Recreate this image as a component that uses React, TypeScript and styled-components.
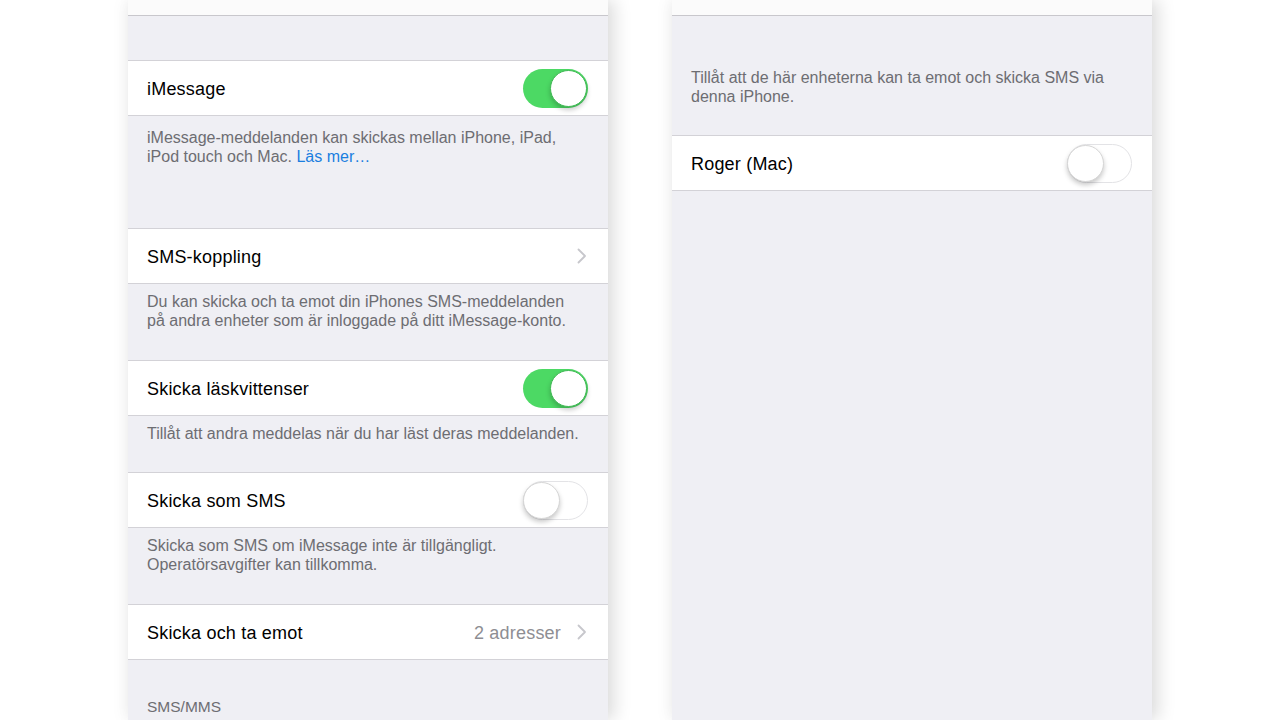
import React from "react";
import styled, { createGlobalStyle } from "styled-components";

const Global = createGlobalStyle`
  html, body { margin: 0; padding: 0; background: #ffffff; }
  body { font-family: "Liberation Sans", Arial, sans-serif; -webkit-font-smoothing: antialiased; }
  #root { height: 720px; overflow: hidden; }
`;

const Page = styled.div`
  display: flex;
  gap: 64px;
  padding-left: 128px;
  height: 720px;
  overflow: hidden;
  background: #ffffff;
`;

const Screen = styled.div`
  width: 480px;
  height: 720px;
  background: #efeff4;
  box-shadow: 7px 0 16px rgba(0, 0, 0, 0.13), -5px 0 14px rgba(0, 0, 0, 0.04);
  display: flex;
  flex-direction: column;
`;

const TopCell = styled.div`
  height: 15px;
  background: #fbfbfb;
  border-bottom: 1px solid #c8c7cc;
  flex-shrink: 0;
`;

const Spacer = styled.div<{ $h: number }>`
  height: ${(p) => p.$h}px;
  flex-shrink: 0;
`;

const Group = styled.div`
  background: #ffffff;
  border-top: 1px solid #d3d2d7;
  border-bottom: 1px solid #d3d2d7;
  flex-shrink: 0;
`;

const Row = styled.div`
  height: 54px;
  display: flex;
  align-items: center;
  padding: 0 20px 0 19px;
`;

const Label = styled.div`
  flex: 1;
  font-size: 18px;
  color: #000000;
  letter-spacing: 0.2px;
  padding-top: 2px;
`;

const Detail = styled.div`
  font-size: 18px;
  color: #8e8e93;
  margin-right: 16px;
  letter-spacing: 0.2px;
  padding-top: 2px;
`;

const Footer = styled.div<{ $top: number; $bottom: number; $right?: number }>`
  padding: ${(p) => p.$top}px ${(p) => p.$right ?? 40}px ${(p) => p.$bottom}px 19px;
  font-size: 16px;
  line-height: 19px;
  color: #6d6d72;
  flex-shrink: 0;
`;

const Link = styled.span`
  color: #1a7ee0;
`;

const Header = styled.div`
  padding: 0 19px;
  font-size: 15.5px;
  line-height: 19px;
  color: #6d6d72;
`;

const Track = styled.div<{ $on: boolean }>`
  width: 65px;
  height: 39px;
  border-radius: 20px;
  box-sizing: border-box;
  position: relative;
  background: ${(p) => (p.$on ? "#4cd964" : "#ffffff")};
  border: ${(p) => (p.$on ? "none" : "1.5px solid #e3e3e6")};
  flex-shrink: 0;
`;

const Knob = styled.div<{ $on: boolean }>`
  position: absolute;
  top: ${(p) => (p.$on ? 1 : 0)}px;
  ${(p) => (p.$on ? "right: 1px;" : "left: -1px;")}
  width: 37px;
  height: 37px;
  border-radius: 50%;
  background: #ffffff;
  box-sizing: border-box;
  border: ${(p) => (p.$on ? "1px solid #3fb953" : "1px solid #d6d6d6")};
  box-shadow: 0 3px 5px rgba(0, 0, 0, 0.22);
`;

const Toggle = ({ on }: { on: boolean }) => (
  <Track $on={on}>
    <Knob $on={on} />
  </Track>
);

const Chevron = () => (
  <svg width="10" height="16" viewBox="0 0 10 16" style={{ display: "block", marginRight: 1 }}>
    <path d="M1.5 1.5 L8 8 L1.5 14.5" fill="none" stroke="#c7c7cc" strokeWidth="1.8" strokeLinecap="round" strokeLinejoin="round" />
  </svg>
);

export default function App() {
  return (
    <>
      <Global />
      <Page>
        <Screen>
          <TopCell />
          <Spacer $h={44} />
          <Group>
            <Row>
              <Label>iMessage</Label>
              <Toggle on />
            </Row>
          </Group>
          <Footer $top={12} $bottom={62}>
            iMessage-meddelanden kan skickas mellan iPhone, iPad, iPod touch och Mac. <Link>Läs mer…</Link>
          </Footer>
          <Group>
            <Row>
              <Label>SMS-koppling</Label>
              <Chevron />
            </Row>
          </Group>
          <Footer $top={8} $bottom={30}>
            Du kan skicka och ta emot din iPhones SMS-meddelanden på andra enheter som är inloggade på ditt iMessage-konto.
          </Footer>
          <Group>
            <Row>
              <Label>Skicka läskvittenser</Label>
              <Toggle on />
            </Row>
          </Group>
          <Footer $top={8} $bottom={29} $right={12}>
            Tillåt att andra meddelas när du har läst deras meddelanden.
          </Footer>
          <Group>
            <Row>
              <Label>Skicka som SMS</Label>
              <Toggle on={false} />
            </Row>
          </Group>
          <Footer $top={8} $bottom={30}>
            Skicka som SMS om iMessage inte är tillgängligt. Operatörsavgifter kan tillkomma.
          </Footer>
          <Group>
            <Row>
              <Label>Skicka och ta emot</Label>
              <Detail>2 adresser</Detail>
              <Chevron />
            </Row>
          </Group>
          <Spacer $h={37} />
          <Header>SMS/MMS</Header>
        </Screen>
        <Screen>
          <TopCell />
          <Footer $top={52} $bottom={29}>
            Tillåt att de här enheterna kan ta emot och skicka SMS via denna iPhone.
          </Footer>
          <Group>
            <Row>
              <Label>Roger (Mac)</Label>
              <Toggle on={false} />
            </Row>
          </Group>
        </Screen>
      </Page>
    </>
  );
}
